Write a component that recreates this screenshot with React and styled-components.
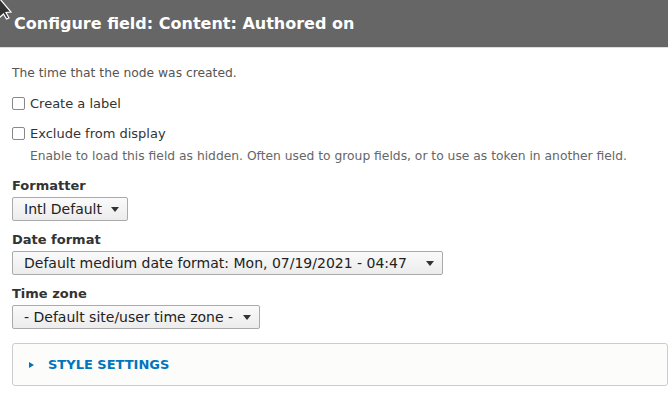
import React from "react";
import styled, { createGlobalStyle } from "styled-components";

const GlobalStyle = createGlobalStyle`
  * { box-sizing: border-box; }
  body {
    margin: 0;
    background: #fff;
    font-family: "DejaVu Sans", sans-serif;
    color: #222;
  }
`;

const Dialog = styled.div`
  position: relative;
  width: 668px;
  height: 394px;
  overflow: hidden;
`;

const TitleBar = styled.div`
  height: 48px;
  background: #666;
  display: flex;
  align-items: center;
  padding: 0 14px;
  border-bottom: 1px solid #ddd;
  h1 {
    margin: 0;
    color: #fff;
    font-size: 16px;
    font-weight: bold;
  }
`;

const Cursor = styled.svg`
  position: absolute;
  left: 0;
  top: 0;
  overflow: visible;
`;

const Body = styled.div`
  padding: 18px 12px 0 12px;
`;

const Intro = styled.p`
  margin: 0 0 16px;
  font-size: 12.3px;
  color: #555;
`;

const CheckRow = styled.label`
  display: flex;
  align-items: center;
  gap: 5px;
  font-size: 13px;
  color: #333;
  margin-bottom: ${(p) => p.$mb || 12}px;
`;

const Box = styled.span`
  width: 13px;
  height: 13px;
  border: 1px solid #888;
  border-radius: 2px;
  background: #fff;
`;

const Help = styled.div`
  margin: 0 0 15px 18px;
  font-size: 12.3px;
  color: #666;
`;

const Field = styled.div`
  margin-bottom: ${(p) => p.$mb || 11}px;
`;

const Label = styled.div`
  font-size: 13px;
  font-weight: bold;
  color: #333;
  margin-bottom: 4px;
`;

const Select = styled.div`
  display: inline-flex;
  align-items: center;
  justify-content: space-between;
  width: ${(p) => p.$w}px;
  height: 24px;
  padding: 0 8px 0 11px;
  border: 1px solid #aaa;
  border-radius: 2px;
  background: linear-gradient(#fafafa, #ececec);
  font-size: 14px;
  color: #222;
  &::after {
    content: "";
    border-left: 4px solid transparent;
    border-right: 4px solid transparent;
    border-top: 5px solid #333;
  }
`;

const Details = styled.div`
  margin: 3px -12px 0 0;
  height: 43px;
  border: 1px solid #ccc;
  border-radius: 3px;
  background: #fcfcfa;
  display: flex;
  align-items: center;
  padding-left: 16px;
  gap: 14px;
  color: #0074bd;
  font-size: 13px;
  font-weight: bold;
  text-transform: uppercase;
  &::before {
    content: "";
    border-top: 3px solid transparent;
    border-bottom: 3px solid transparent;
    border-left: 5px solid #0074bd;
  }
`;

export default function App() {
  return (
    <>
      <GlobalStyle />
      <Dialog>
        <TitleBar>
          <h1>Configure field: Content: Authored on</h1>
        </TitleBar>
        <Cursor width="14" height="20" viewBox="0 0 14 20">
          <path
            d="M-6 -8 L11 12 L6 12.5 L9 18 L6.5 19 L3.5 14 L-1 18 Z"
            fill="#333"
            stroke="#fff"
            strokeWidth="1.2"
          />
        </Cursor>
        <Body>
          <Intro>The time that the node was created.</Intro>
          <CheckRow $mb={15}>
            <Box />
            Create a label
          </CheckRow>
          <CheckRow $mb={8}>
            <Box />
            Exclude from display
          </CheckRow>
          <Help>Enable to load this field as hidden. Often used to group fields, or to use as token in another field.</Help>
          <Field>
            <Label>Formatter</Label>
            <Select $w={116}>Intl Default</Select>
          </Field>
          <Field>
            <Label>Date format</Label>
            <Select $w={431}>Default medium date format: Mon, 07/19/2021 - 04:47</Select>
          </Field>
          <Field $mb={14}>
            <Label>Time zone</Label>
            <Select $w={248}>- Default site/user time zone -</Select>
          </Field>
          <Details>Style settings</Details>
        </Body>
      </Dialog>
    </>
  );
}
